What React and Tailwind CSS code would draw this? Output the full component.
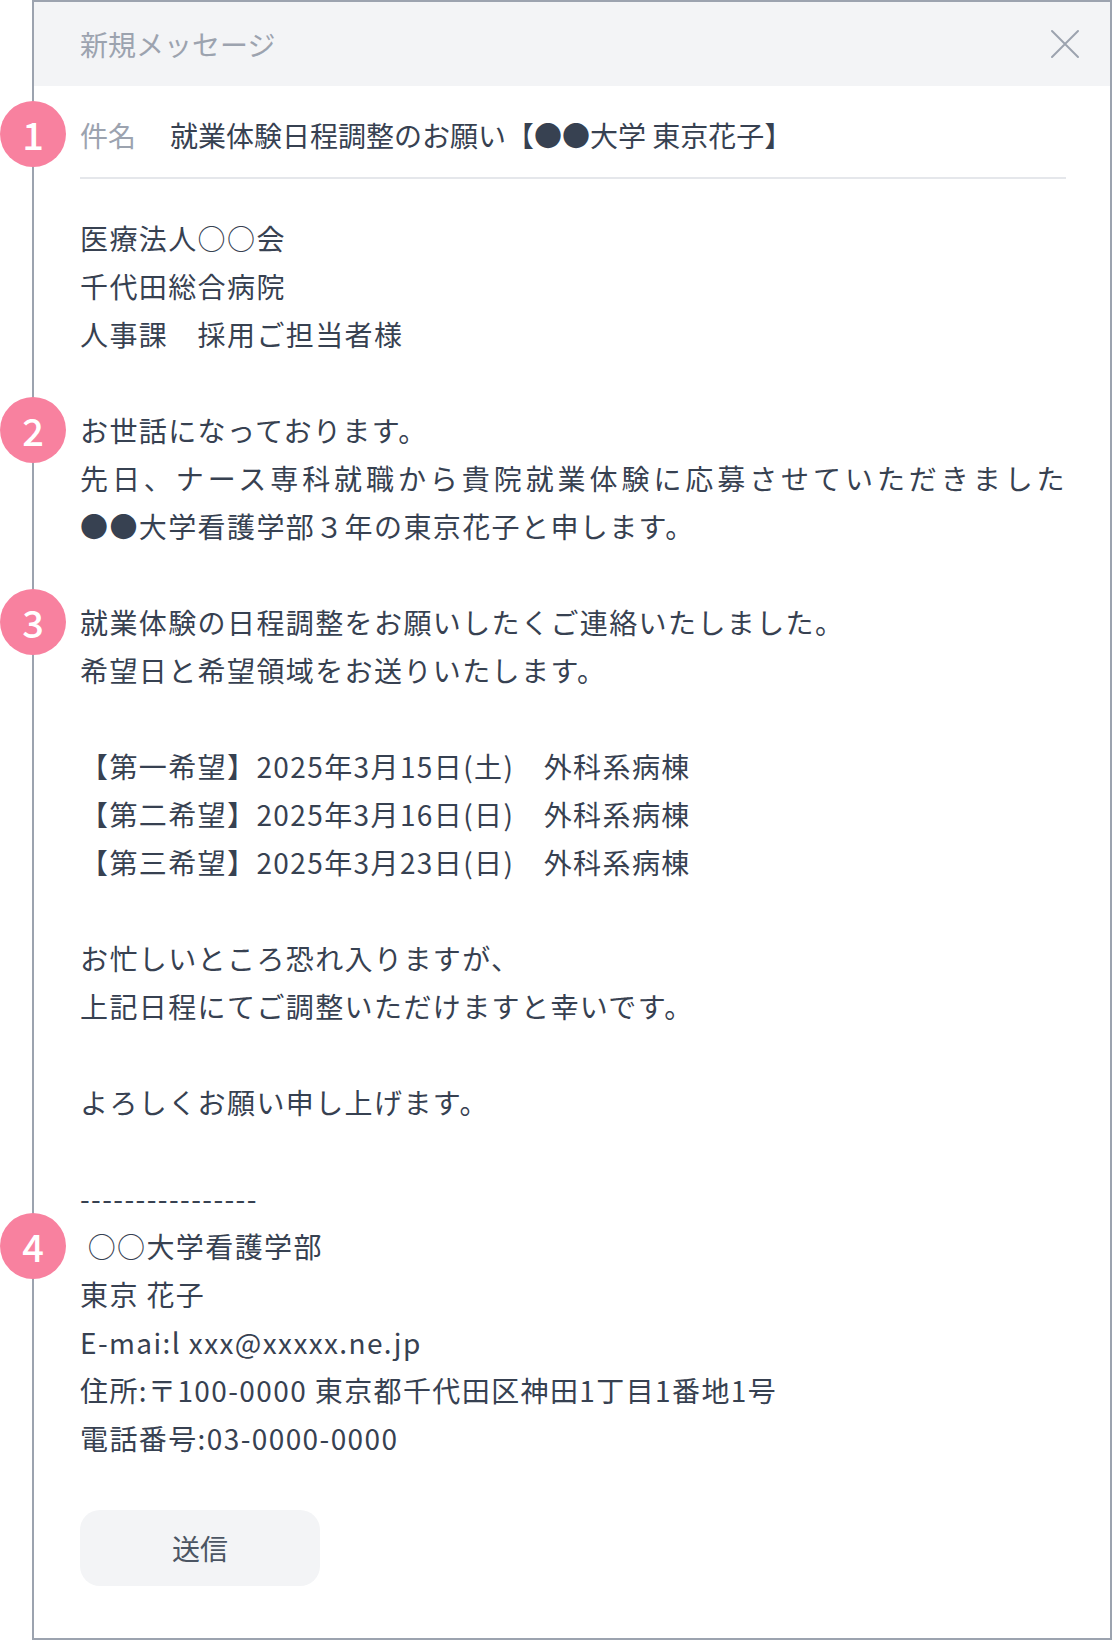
function Badge({ n, className }) {
  return (
    <span
      className={`absolute -left-[80px] flex h-[66px] w-[66px] items-center justify-center rounded-full bg-[#f8819f] text-[38px] font-medium leading-none text-white ${className}`}
    >
      {n}
    </span>
  );
}

function CloseIcon() {
  return (
    <svg width="30" height="30" viewBox="0 0 30 30" fill="none" className="text-[#9ca3af]">
      <path d="M2 2L28 28M28 2L2 28" stroke="currentColor" strokeWidth="2" strokeLinecap="round" />
    </svg>
  );
}

const sections = [
  [{ t: "医療法人○○会" }, { t: "千代田総合病院" }, { t: "人事課　採用ご担当者様" }],
  [
    { t: "お世話になっております。", badge: 2 },
    { t: "先日、ナース専科就職から貴院就業体験に応募させていただきました", justify: true },
    { t: "●●大学看護学部３年の東京花子と申します。" },
  ],
  [
    { t: "就業体験の日程調整をお願いしたくご連絡いたしました。", badge: 3 },
    { t: "希望日と希望領域をお送りいたします。" },
  ],
  [
    { t: "【第一希望】2025年3月15日(土)　外科系病棟" },
    { t: "【第二希望】2025年3月16日(日)　外科系病棟" },
    { t: "【第三希望】2025年3月23日(日)　外科系病棟" },
  ],
  [{ t: "お忙しいところ恐れ入りますが、" }, { t: "上記日程にてご調整いただけますと幸いです。" }],
  [{ t: "よろしくお願い申し上げます。" }],
  [
    { t: "----------------" },
    { t: " ○○大学看護学部", badge: 4 },
    { t: "東京 花子" },
    { t: "E-mai:l xxx@xxxxx.ne.jp" },
    { t: "住所:〒100-0000 東京都千代田区神田1丁目1番地1号" },
    { t: "電話番号:03-0000-0000" },
  ],
];

export default function App() {
  return (
    <div className="min-h-screen bg-white pl-[32px] font-['Noto_Sans_CJK_JP','Noto_Sans',sans-serif] text-[#374151]">
      <div className="flex flex-col border-2 border-[#9ca3af] bg-white pb-[52px]">
        <div className="flex h-[84px] items-center justify-between bg-[#f3f4f6] pl-[46px] pr-[30px]">
          <span className="text-[28px] text-[#9ca3af]">新規メッセージ</span>
          <CloseIcon />
        </div>

        <div className="pl-[46px] pr-[44px]">
          <div className="relative flex h-[93px] items-center gap-[34px] border-b-2 border-[#e5e7eb] pt-[6px]">
            <Badge n={1} className="top-[15px]" />
            <span className="text-[28px] text-[#9ca3af]">件名</span>
            <span className="text-[28px]">就業体験日程調整のお願い【●●大学 東京花子】</span>
          </div>

          <div className="flex flex-col gap-[48px] pt-[35px] text-[28px] leading-[48px] tracking-[0.05em]">
            {sections.map((lines, i) => (
              <div key={i}>
                {lines.map((l, j) => (
                  <div
                    key={j}
                    className={`relative whitespace-pre ${
                      l.justify ? "text-justify [text-align-last:justify]" : ""
                    }`}
                  >
                    {l.badge ? <Badge n={l.badge} className="top-[-9px] tracking-normal" /> : null}
                    {l.t}
                  </div>
                ))}
              </div>
            ))}
          </div>

          <button className="mt-[48px] flex h-[76px] w-[240px] items-center justify-center rounded-[20px] bg-[#f3f4f6] text-[28px] text-[#4b5563]">
            送信
          </button>
        </div>
      </div>
    </div>
  );
}
